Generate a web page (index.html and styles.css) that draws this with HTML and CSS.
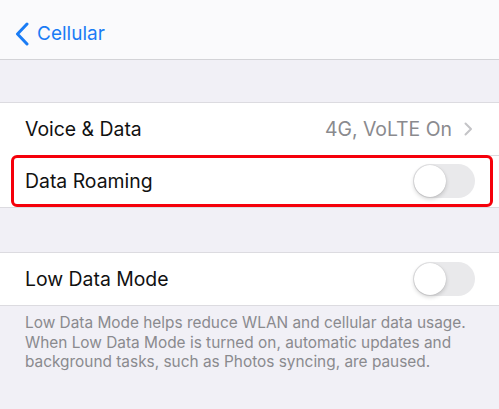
FILE: index.html
```html
<!DOCTYPE html>
<html>
<head>
<meta charset="utf-8">
<link rel="stylesheet" href="styles.css">
</head>
<body>
<div class="nav">
  <div class="back">
    <svg class="chev" width="14" height="24" viewBox="0 0 14 24"><path d="M12 2 L2.5 12 L12 22" fill="none" stroke="#1a7cf5" stroke-width="3" stroke-linecap="round" stroke-linejoin="round"/></svg>
    <span>Cellular</span>
  </div>
</div>
<div class="gap1"></div>
<div class="group">
  <div class="row">
    <span class="label">Voice &amp; Data</span>
    <span class="detail">4G, VoLTE On<svg class="disc" width="9" height="14" viewBox="0 0 9 14"><path d="M1.5 1.5 L7 7 L1.5 12.5" fill="none" stroke="#c4c4c7" stroke-width="2" stroke-linecap="round" stroke-linejoin="round"/></svg></span>
  </div>
  <div class="row sep highlight">
    <span class="label">Data Roaming</span>
    <span class="toggle"><span class="knob"></span></span>
  </div>
</div>
<div class="gap2"></div>
<div class="group">
  <div class="row">
    <span class="label">Low Data Mode</span>
    <span class="toggle"><span class="knob"></span></span>
  </div>
</div>
<p class="footer">Low Data Mode helps reduce WLAN and cellular data usage. When Low Data Mode is turned on, automatic updates and background tasks, such as Photos syncing, are paused.</p>
</body>
</html>
```

FILE: styles.css
```css
html, body {
  margin: 0;
  padding: 0;
}
body {
  width: 499px;
  height: 409px;
  overflow: hidden;
  background: #f1f0f6;
  font-family: Inter, "Noto Sans", sans-serif;
}
.nav {
  height: 60px;
  background: #fafafc;
  border-bottom: 1px solid #d3d3d7;
  box-sizing: border-box;
  display: flex;
  align-items: center;
}
.back {
  display: flex;
  align-items: center;
  margin-left: 15px;
  margin-top: 8px;
  color: #1a7cf5;
  font-size: 19px;
}
.chev {
  margin-right: 8px;
}
.gap1 {
  height: 42px;
}
.gap2 {
  height: 44px;
}
.group {
  background: #ffffff;
  border-top: 1px solid #dcdbe0;
  border-bottom: 1px solid #dcdbe0;
}
.row {
  position: relative;
  height: 52px;
  display: flex;
  align-items: center;
  justify-content: space-between;
  padding: 0 24px 0 25px;
  box-sizing: border-box;
}
.sep::before {
  content: "";
  position: absolute;
  left: 25px;
  right: 0;
  top: 0;
  border-top: 1px solid #dcdbe0;
}
.highlight::after {
  content: "";
  position: absolute;
  left: 11px;
  right: 6px;
  top: 0;
  bottom: 0;
  border: 3px solid #f5000a;
  border-radius: 6px;
}
.label {
  font-size: 19.4px;
  color: #111111;
}
.detail {
  display: flex;
  align-items: center;
  font-size: 19.4px;
  color: #8a8a8e;
}
.disc {
  margin-left: 12px;
  margin-right: 2px;
}
.toggle {
  position: relative;
  width: 62px;
  height: 34px;
  border-radius: 17px;
  background: #e9e9eb;
}
.knob {
  position: absolute;
  left: 1px;
  top: 1px;
  width: 32px;
  height: 32px;
  border-radius: 50%;
  background: #fff;
  box-shadow: 0 2px 4px rgba(0,0,0,0.18), 0 0 1px rgba(0,0,0,0.2);
}
.footer {
  margin: 7px 20px 0 25px;
  font-size: 15.4px;
  line-height: 19.5px;
  color: #8a8a8e;
}
```
